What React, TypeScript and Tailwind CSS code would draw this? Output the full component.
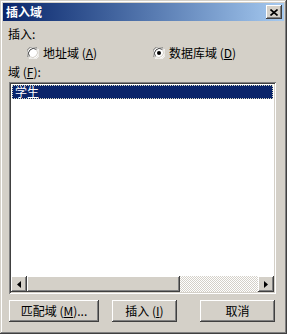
import React from "react";

const raised =
  "shadow-[inset_-1px_-1px_#404040,inset_1px_1px_#ffffff,inset_-2px_-2px_#808080,inset_2px_2px_#d4d0c8]";
const sunken =
  "shadow-[inset_1px_1px_#808080,inset_-1px_-1px_#ffffff,inset_2px_2px_#404040,inset_-2px_-2px_#d4d0c8]";

function Radio({ checked }: { checked?: boolean }) {
  return (
    <svg width="12" height="12" viewBox="0 0 12 12" className="shrink-0">
      <circle cx="6" cy="6" r="5.5" fill="#ffffff" />
      <path d="M1.5 10.5 A6 6 0 0 1 10.5 1.5" stroke="#808080" strokeWidth="1" fill="none" />
      <path d="M2.5 9.5 A5 5 0 0 1 9.5 2.5" stroke="#404040" strokeWidth="1" fill="none" />
      <path d="M10.5 1.5 A6 6 0 0 1 1.5 10.5" stroke="#ffffff" strokeWidth="1" fill="none" />
      <path d="M9.5 2.5 A5 5 0 0 1 2.5 9.5" stroke="#d4d0c8" strokeWidth="1" fill="none" />
      {checked && <circle cx="6" cy="6" r="2" fill="#000000" />}
    </svg>
  );
}

function Button({ children, width }: { children: React.ReactNode; width: string }) {
  return (
    <div
      className={`${width} h-[22px] bg-[#d4d0c8] ${raised} flex items-center justify-center text-[12px] leading-none text-black`}
    >
      {children}
    </div>
  );
}

function Arrow({ dir }: { dir: "left" | "right" }) {
  return (
    <div className={`w-[16px] h-[16px] bg-[#d4d0c8] ${raised} flex items-center justify-center shrink-0`}>
      <svg width="4" height="7" viewBox="0 0 4 7">
        {dir === "left" ? (
          <path d="M4 0 L0 3.5 L4 7 Z" fill="#000" />
        ) : (
          <path d="M0 0 L4 3.5 L0 7 Z" fill="#000" />
        )}
      </svg>
    </div>
  );
}

export default function App() {
  return (
    <div
      className="w-[287px] h-[334px] bg-[#d4d0c8] p-[3px] flex flex-col shadow-[inset_-1px_-1px_#404040,inset_1px_1px_#d4d0c8,inset_-2px_-2px_#808080,inset_2px_2px_#ffffff]"
      style={{ fontFamily: '"Noto Sans CJK SC", "Liberation Sans", sans-serif' }}
    >
      {/* title bar */}
      <div className="h-[18px] bg-gradient-to-r from-[#0a246a] to-[#a6caf0] flex items-center justify-between pl-[3px] pr-[2px]">
        <span className="text-white font-bold text-[12px] leading-none">插入域</span>
        <div className={`w-[16px] h-[14px] bg-[#d4d0c8] ${raised} flex items-center justify-center`}>
          <svg width="8" height="7" viewBox="0 0 8 7">
            <path d="M0.5 0.5 L7.5 6.5 M7.5 0.5 L0.5 6.5" stroke="#000" strokeWidth="1.6" />
          </svg>
        </div>
      </div>

      {/* body */}
      <div className="flex flex-col px-[5px] text-[12px] leading-[14px] text-black">
        <div className="mt-[6px]">插入:</div>
        <div className="flex items-center mt-[5px] h-[14px]">
          <div className="flex items-center gap-[4px] ml-[19px] w-[126px]">
            <Radio />
            <span>
              地址域 (<u>A</u>)
            </span>
          </div>
          <div className="flex items-center gap-[4px]">
            <Radio checked />
            <span>
              数据库域 (<u>D</u>)
            </span>
          </div>
        </div>
        <div className="mt-[5px]">
          域 (<u>F</u>):
        </div>

        {/* list box */}
        <div className={`mt-[3px] ml-[1px] w-[267px] h-[212px] bg-white ${sunken} p-[2px] flex flex-col`}>
          <div className="flex-1 pt-[1px] pl-[1px] pr-[1px]">
            <div className="h-[14px] bg-[#0a246a] outline-1 outline-dotted outline-offset-[-1px] outline-[#d8d8c0] text-white pl-[3px] leading-[14px]">
              学生
            </div>
          </div>
          {/* horizontal scrollbar */}
          <div className="h-[16px] flex">
            <Arrow dir="left" />
            <div className={`w-[153px] h-[16px] bg-[#d4d0c8] ${raised}`} />
            <div className="flex-1 h-[16px] bg-[repeating-conic-gradient(#ffffff_0_25%,#d4d0c8_0_50%)] bg-[length:2px_2px]" />
            <Arrow dir="right" />
          </div>
        </div>

        {/* buttons */}
        <div className="flex mt-[6px] ml-[1px]">
          <Button width="w-[90px]">
            匹配域 (<u>M</u>)...
          </Button>
          <div className="ml-[13px]">
            <Button width="w-[65px]">
              插入 (<u>I</u>)
            </Button>
          </div>
          <div className="ml-[23px]">
            <Button width="w-[75px]">取消</Button>
          </div>
        </div>
      </div>
    </div>
  );
}
